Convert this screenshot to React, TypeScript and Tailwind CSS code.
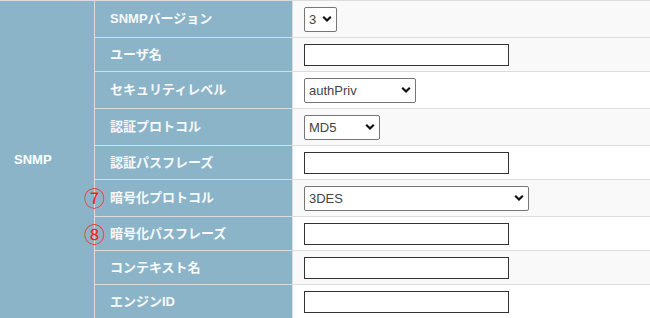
import React from 'react';

type Row = {
  label: string;
  kind: 'select' | 'input';
  h: string;
  value?: string;
  w?: string;
  mark?: string;
  shade: boolean;
};

const rows: Row[] = [
  { label: 'SNMPバージョン', kind: 'select', h: 'h-[36px]', value: '3', w: 'w-[33px]', shade: true },
  { label: 'ユーザ名', kind: 'input', h: 'h-[33px]', shade: true },
  { label: 'セキュリティレベル', kind: 'select', h: 'h-[36px]', value: 'authPriv', w: 'w-[112px]', shade: false },
  { label: '認証プロトコル', kind: 'select', h: 'h-[36px]', value: 'MD5', w: 'w-[76px]', shade: true },
  { label: '認証パスフレーズ', kind: 'input', h: 'h-[33px]', shade: false },
  { label: '暗号化プロトコル', kind: 'select', h: 'h-[36px]', value: '3DES', w: 'w-[225px]', mark: '⑦', shade: true },
  { label: '暗号化パスフレーズ', kind: 'input', h: 'h-[33px]', mark: '⑧', shade: false },
  { label: 'コンテキスト名', kind: 'input', h: 'h-[33px]', shade: true },
  { label: 'エンジンID', kind: 'input', h: 'h-[33px]', shade: false },
];

const Chevron = () => (
  <svg className="absolute right-[5px] top-1/2 -translate-y-1/2 pointer-events-none" width="10" height="7" viewBox="0 0 10 7">
    <path d="M1.2 1.2 L5 5 L8.8 1.2" fill="none" stroke="#111" strokeWidth="2.2" />
  </svg>
);

const Select = ({ value, w }: { value: string; w: string }) => (
  <div className={`relative h-[25px] ${w}`}>
    <select
      defaultValue={value}
      className="appearance-none w-full h-full bg-white border border-[#767676] rounded-[2px] pl-[4px] text-[13px] text-[#444] outline-none"
    >
      <option>{value}</option>
    </select>
    <Chevron />
  </div>
);

export default function App() {
  return (
    <div className="w-[650px] h-[318px] overflow-hidden bg-white font-['Liberation_Sans','Noto_Sans_CJK_JP',sans-serif]">
      <div className="grid grid-cols-[94px_197px_1fr] gap-px bg-[#dcdcdc] pt-px">
        <div className="row-span-9 bg-[#8bb4c8] flex items-center pl-[14px] text-[13px] font-bold text-white">
          SNMP
        </div>
        {rows.map((r) => (
          <React.Fragment key={r.label}>
            <div className={`relative ${r.h} bg-[#8bb4c8] flex items-center pl-[15px] text-[13px] font-bold text-[#f7f9fa]`}>
              {r.mark && (
                <span className="absolute left-[-11px] top-1/2 -translate-y-1/2 text-[21px] leading-none font-normal text-[#ff1a1a]">
                  {r.mark}
                </span>
              )}
              {r.label}
            </div>
            <div className={`${r.h} ${r.shade ? 'bg-[#f9f9f9]' : 'bg-white'} flex items-center pl-[11px]`}>
              {r.kind === 'select' ? (
                <Select value={r.value ?? ''} w={r.w ?? ''} />
              ) : (
                <input type="text" className="w-[205px] h-[22px] bg-white border border-[#333] outline-none" />
              )}
            </div>
          </React.Fragment>
        ))}
      </div>
    </div>
  );
}
